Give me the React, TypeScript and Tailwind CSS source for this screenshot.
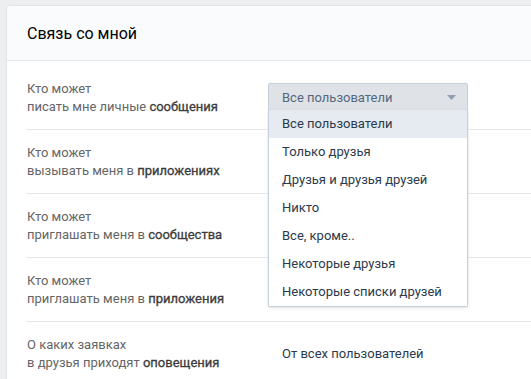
import React from 'react';

const rows = [
  { top: 'Кто может', plain: 'писать мне личные ', bold: 'сообщения' },
  { top: 'Кто может', plain: 'вызывать меня в ', bold: 'приложениях' },
  { top: 'Кто может', plain: 'приглашать меня в ', bold: 'сообщества' },
  { top: 'Кто может', plain: 'приглашать меня в ', bold: 'приложения' },
  { top: 'О каких заявках', plain: 'в друзья приходят ', bold: 'оповещения' },
];

const options = [
  'Все пользователи',
  'Только друзья',
  'Друзья и друзья друзей',
  'Никто',
  'Все, кроме..',
  'Некоторые друзья',
  'Некоторые списки друзей',
];

const App: React.FC = () => {
  return (
    <div className="w-[531px] h-[379px] overflow-hidden bg-[#edeef0] font-['Roboto',sans-serif] text-[13px]">
      <div className="ml-[6px] mt-[5px] w-[600px] bg-white border border-[#e3e4e8] rounded-tl-[4px]">
        {/* header */}
        <div className="h-[55px] bg-[#fafbfc] border-b border-[#e7e8ec] rounded-tl-[4px] pl-[20px] flex items-center">
          <h2 className="text-[16px] text-black leading-none pt-[1px]">Связь со мной</h2>
        </div>

        <div className="relative pt-[5px] pl-[20px]">
          {rows.map((r, i) => (
            <div key={i} className="h-[64px] border-b border-[#e7e8ec] flex items-center">
              <div className="w-[241px] leading-[18px] text-[#656565]">
                <div>{r.top}</div>
                <div>
                  {r.plain}
                  <span className="text-[#3a3a3a] [-webkit-text-stroke:0.3px_#3a3a3a]">{r.bold}</span>
                </div>
              </div>
              {i === 0 && (
                <div className="w-[200px] h-[30px] bg-[#dfe3e8] border border-[#c5d0db] rounded-t-[2px] flex items-center justify-between pl-[13px] pr-[11px] text-[#55677d]">
                  <span>Все пользователи</span>
                  <svg width="9" height="5" viewBox="0 0 9 5">
                    <path d="M0 0h9L4.5 5z" fill="#929eb0" />
                  </svg>
                </div>
              )}
              {i === 4 && <div className="pl-[14px] text-[#2b3a4b]">От всех пользователей</div>}
            </div>
          ))}

          {/* open dropdown menu */}
          <div className="absolute left-[261px] top-[49px] w-[200px] bg-white border border-t-0 border-[#c5d0db] shadow-[0_1px_3px_rgba(0,0,0,0.12)] rounded-b-[2px]">
            {options.map((o, i) => (
              <div
                key={o}
                className={`h-[28px] flex items-center pl-[13px] text-[#2b3a4b] ${i === 0 ? 'bg-[#e5ebf1]' : ''}`}
              >
                {o}
              </div>
            ))}
          </div>
        </div>
      </div>
    </div>
  );
};

export default App;
